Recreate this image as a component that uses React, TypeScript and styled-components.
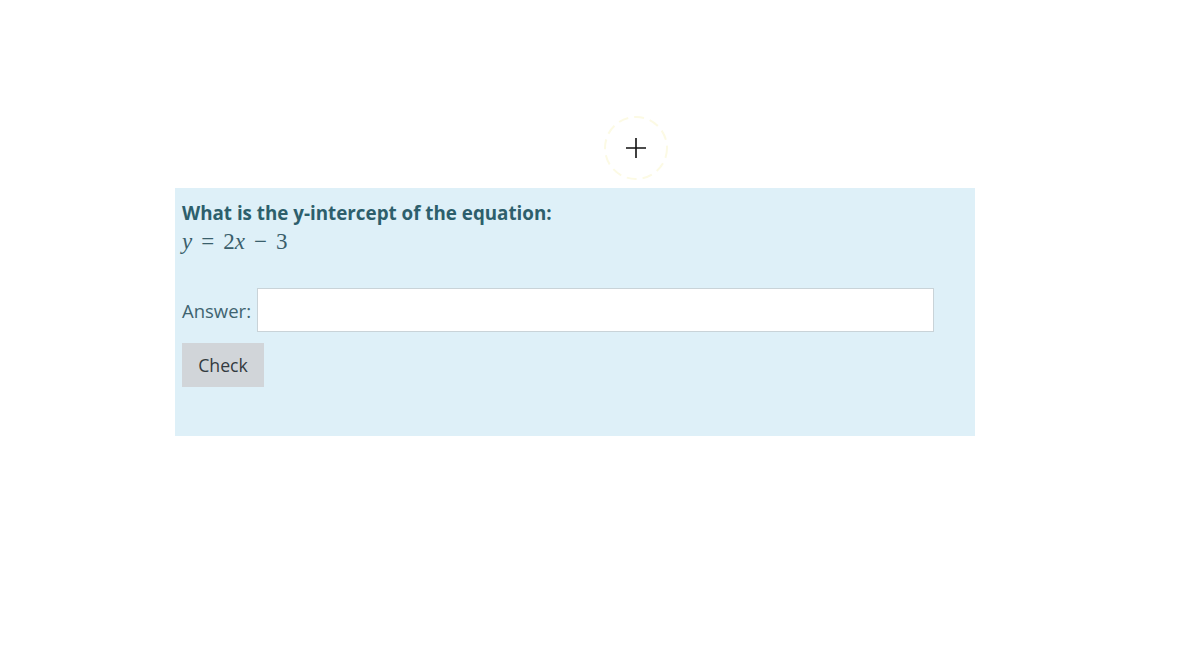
import React from 'react';
import styled, { createGlobalStyle } from 'styled-components';

const GlobalStyle = createGlobalStyle`
  html, body {
    margin: 0;
    background: #ffffff;
  }
  body {
    font-family: "Open Sans", "Noto Sans", sans-serif;
  }
`;

const Page = styled.div`
  position: relative;
  width: 1200px;
  height: 670px;
  padding: 188px 0 0 175px;
  box-sizing: border-box;
`;

const Panel = styled.div`
  width: 800px;
  height: 248px;
  box-sizing: border-box;
  padding: 12px 7px;
  background: #def0f8;
`;

const Question = styled.div`
  font-weight: 700;
  font-size: 18.8px;
  line-height: 26px;
  color: #2d5f6c;
`;

const MathLine = styled.div`
  display: flex;
  align-items: baseline;
  height: 32px;
  font-family: "Liberation Serif", "DejaVu Serif", serif;
  font-size: 23px;
  line-height: 32px;
  color: #3a5f6c;
`;

const MathVar = styled.span`
  font-style: italic;
`;

const MathOp = styled.span`
  margin: 0 9px;
`;

const AnswerRow = styled.div`
  display: flex;
  align-items: center;
  gap: 6px;
  margin-top: 30px;
`;

const Label = styled.label`
  font-size: 18.5px;
  color: #3f6470;
`;

const Input = styled.input`
  width: 677px;
  height: 44px;
  box-sizing: border-box;
  border: 1px solid #c9d3d8;
  background: #ffffff;
  outline: none;
`;

const CheckButton = styled.button`
  margin-top: 11px;
  width: 82px;
  height: 44px;
  border: none;
  background: #d1d5d9;
  color: #333a40;
  font-family: "Open Sans", "Noto Sans", sans-serif;
  font-size: 17.7px;
`;

const Cursor = styled.svg`
  position: absolute;
  left: 602px;
  top: 114px;
`;

export default function App() {
  return (
    <>
      <GlobalStyle />
      <Page>
        <Cursor width="68" height="68" viewBox="0 0 68 68">
          <circle cx="34" cy="34" r="31" fill="none" stroke="#fcfae4" strokeWidth="2" strokeDasharray="10 6" />
          <path d="M34 24v20M24 34h20" stroke="#111" strokeWidth="1.6" />
        </Cursor>
        <Panel>
          <Question>What is the y-intercept of the equation:</Question>
          <MathLine>
            <MathVar>y</MathVar>
            <MathOp>=</MathOp>
            <span>2</span>
            <MathVar>x</MathVar>
            <MathOp>−</MathOp>
            <span>3</span>
          </MathLine>
          <AnswerRow>
            <Label htmlFor="answer">Answer:</Label>
            <Input id="answer" type="text" />
          </AnswerRow>
          <CheckButton>Check</CheckButton>
        </Panel>
      </Page>
    </>
  );
}
